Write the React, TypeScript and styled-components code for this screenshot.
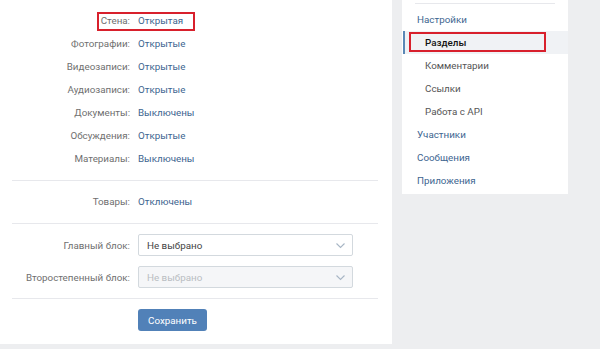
import styled, { createGlobalStyle } from "styled-components";

const GlobalStyle = createGlobalStyle`
    body {
        margin: 0;
        background: #edeef0;
        font-family: Roboto, "Open Sans", "Liberation Sans", sans-serif;
        font-size: 9.8px;
        color: #000;
    }
`;

const privacy = [
    { label: "Стена:", value: "Открытая", marked: true },
    { label: "Фотографии:", value: "Открытые" },
    { label: "Видеозаписи:", value: "Открытые" },
    { label: "Аудиозаписи:", value: "Открытые" },
    { label: "Документы:", value: "Выключены" },
    { label: "Обсуждения:", value: "Открытые" },
    { label: "Материалы:", value: "Выключены" },
];

const menu = [
    { title: "Настройки", kind: "main" },
    { title: "Разделы", kind: "sub", active: true },
    { title: "Комментарии", kind: "sub" },
    { title: "Ссылки", kind: "sub" },
    { title: "Работа с API", kind: "sub" },
    { title: "Участники", kind: "main" },
    { title: "Сообщения", kind: "main" },
    { title: "Приложения", kind: "main" },
];

const Chevron = () => (
    <svg width="11" height="7" viewBox="0 0 11 7">
        <path d="M1.5 1.5 L5.5 5.5 L9.5 1.5" fill="none" stroke="#a8b6c5" strokeWidth="1.1" />
    </svg>
);

const App = () => {
    return (
        <Page>
            <GlobalStyle />
            <MainPanel>
                <Section>
                    {privacy.map((p) => (
                        <Row key={p.label}>
                            {p.marked && <Marker />}
                            <Label>{p.label}</Label>
                            <Value>{p.value}</Value>
                        </Row>
                    ))}
                </Section>
                <Divider />
                <Row>
                    <Label>Товары:</Label>
                    <Value>Отключены</Value>
                </Row>
                <Divider />
                <SelectRow>
                    <Label>Главный блок:</Label>
                    <Select>
                        <span>Не выбрано</span>
                        <Chevron />
                    </Select>
                </SelectRow>
                <SelectRow>
                    <Label>Второстепенный блок:</Label>
                    <Select $disabled>
                        <span>Не выбрано</span>
                        <Chevron />
                    </Select>
                </SelectRow>
                <Divider />
                <ButtonRow>
                    <SaveButton>Сохранить</SaveButton>
                </ButtonRow>
            </MainPanel>
            <Sidebar>
                <SideDivider />
                {menu.map((m) => (
                    <MenuItem key={m.title} $sub={m.kind === "sub"} $active={m.active}>
                        {m.active && <MenuMarker />}
                        {m.title}
                    </MenuItem>
                ))}
            </Sidebar>
        </Page>
    );
};

const Page = styled.div`
    display: flex;
    align-items: flex-start;
    gap: 10px;
    width: 600px;
    height: 349px;
    overflow: hidden;
`;

const MainPanel = styled.div`
    width: 392px;
    height: 344px;
    background: #fff;
    padding-top: 9px;
    box-sizing: border-box;
`;

const Section = styled.div`
    display: flex;
    flex-direction: column;
`;

const Row = styled.div`
    position: relative;
    display: flex;
    align-items: center;
    gap: 8px;
    height: 23px;
`;

const Marker = styled.div`
    position: absolute;
    left: 97px;
    top: 3px;
    width: 94px;
    height: 15px;
    border: 2px solid #d8202c;
`;

const Label = styled.div`
    width: 130px;
    text-align: right;
    color: #6f6f6f;
    white-space: nowrap;
`;

const Value = styled.div`
    color: #3d6590;
`;

const Divider = styled.div`
    height: 1px;
    background: #e7e8ec;
    margin: 10px 14px 10px 12px;

    & + ${Row} {
        margin-top: -1px;
    }
`;

const SelectRow = styled.div`
    display: flex;
    align-items: center;
    gap: 8px;
    height: 22px;
    margin-bottom: 10px;
`;

const Select = styled.div<{ $disabled?: boolean }>`
    display: flex;
    align-items: center;
    justify-content: space-between;
    width: 215px;
    height: 22px;
    box-sizing: border-box;
    padding: 0 6px 0 8px;
    border: 1px solid #d3d9de;
    border-radius: 2px;
    background: ${(p) => (p.$disabled ? "#f5f6f8" : "#fff")};
    color: ${(p) => (p.$disabled ? "#b9bdc2" : "#444")};
`;

const ButtonRow = styled.div`
    display: flex;
    padding-left: 138px;
`;

const SaveButton = styled.button`
    width: 69px;
    height: 22px;
    border: 0;
    border-radius: 3px;
    background: #5181b8;
    color: #fff;
    font-family: inherit;
    font-size: 9.8px;
    padding: 0;
`;

const Sidebar = styled.div`
    width: 166px;
    height: 194px;
    background: #fff;
    padding-top: 3px;
    box-sizing: border-box;
`;

const SideDivider = styled.div`
    height: 1px;
    background: #e7e8ec;
    margin: 0 13px 4px 13px;
`;

const MenuItem = styled.div<{ $sub?: boolean; $active?: boolean }>`
    position: relative;
    display: flex;
    align-items: center;
    height: 23px;
    margin-left: 1px;
    padding-left: ${(p) => (p.$sub ? "20px" : "12px")};
    color: ${(p) => (p.$active ? "#111" : p.$sub ? "#555" : "#3d6590")};
    font-weight: ${(p) => (p.$active ? 500 : 400)};
    background: ${(p) => (p.$active ? "#f0f2f5" : "transparent")};
    border-left: 2px solid ${(p) => (p.$active ? "#5b88b6" : "transparent")};
`;

const MenuMarker = styled.div`
    position: absolute;
    left: 4px;
    top: 1px;
    width: 133px;
    height: 16px;
    border: 2px solid #d8202c;
`;

export default App;
